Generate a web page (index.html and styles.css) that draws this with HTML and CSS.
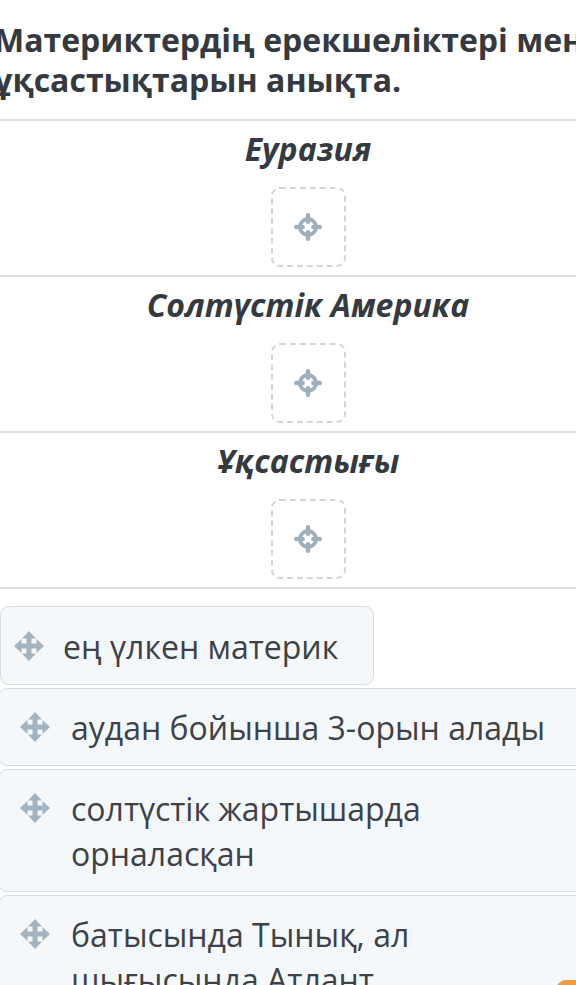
FILE: index.html
```html
<!DOCTYPE html>
<html lang="kk">
<head>
<meta charset="utf-8">
<title>Материктер</title>
<link rel="stylesheet" href="styles.css">
</head>
<body>
<div class="page">
  <h1 class="title"><span class="title-line">Материктердің ерекшеліктері мен</span><span class="title-line">ұқсастықтарын анықта.</span></h1>
  <div class="groups">
    <section class="group">
      <h2 class="group-name">Еуразия</h2>
      <div class="drop">
        <svg class="target" viewBox="0 0 28 28" width="30" height="30"><circle cx="14" cy="14" r="7.5" fill="none" stroke="currentColor" stroke-width="3.6"/><path d="M14 3v6M14 19v6M3 14h6M19 14h6" stroke="currentColor" stroke-width="4.2" stroke-linecap="round"/></svg>
      </div>
    </section>
    <section class="group">
      <h2 class="group-name">Солтүстік Америка</h2>
      <div class="drop">
        <svg class="target" viewBox="0 0 28 28" width="30" height="30"><circle cx="14" cy="14" r="7.5" fill="none" stroke="currentColor" stroke-width="3.6"/><path d="M14 3v6M14 19v6M3 14h6M19 14h6" stroke="currentColor" stroke-width="4.2" stroke-linecap="round"/></svg>
      </div>
    </section>
    <section class="group">
      <h2 class="group-name">Ұқсастығы</h2>
      <div class="drop">
        <svg class="target" viewBox="0 0 28 28" width="30" height="30"><circle cx="14" cy="14" r="7.5" fill="none" stroke="currentColor" stroke-width="3.6"/><path d="M14 3v6M14 19v6M3 14h6M19 14h6" stroke="currentColor" stroke-width="4.2" stroke-linecap="round"/></svg>
      </div>
    </section>
  </div>
  <ul class="items">
    <li class="item item--first">
      <svg class="move" viewBox="0 0 32 32" width="32" height="32"><path d="M16 1l7 7.5h-4.5v5h5V9l7.5 7-7.5 7v-4.5h-5v5H23L16 31l-7-7.5h4.5v-5h-5V23L1 16l7.5-7v4.5h5v-5H9z" fill="currentColor"/></svg>
      <span class="item-text">ең үлкен материк</span>
    </li>
    <li class="item">
      <svg class="move" viewBox="0 0 32 32" width="32" height="32"><path d="M16 1l7 7.5h-4.5v5h5V9l7.5 7-7.5 7v-4.5h-5v5H23L16 31l-7-7.5h4.5v-5h-5V23L1 16l7.5-7v4.5h5v-5H9z" fill="currentColor"/></svg>
      <span class="item-text">аудан бойынша 3-орын алады</span>
    </li>
    <li class="item">
      <svg class="move" viewBox="0 0 32 32" width="32" height="32"><path d="M16 1l7 7.5h-4.5v5h5V9l7.5 7-7.5 7v-4.5h-5v5H23L16 31l-7-7.5h4.5v-5h-5V23L1 16l7.5-7v4.5h5v-5H9z" fill="currentColor"/></svg>
      <span class="item-text">солтүстік жартышарда орналасқан</span>
    </li>
    <li class="item">
      <svg class="move" viewBox="0 0 32 32" width="32" height="32"><path d="M16 1l7 7.5h-4.5v5h5V9l7.5 7-7.5 7v-4.5h-5v5H23L16 31l-7-7.5h4.5v-5h-5V23L1 16l7.5-7v4.5h5v-5H9z" fill="currentColor"/></svg>
      <span class="item-text">батысында Тынық, ал шығысында Атлант мұхиттары</span>
    </li>
  </ul>
</div>
<div class="fab"></div>
</body>
</html>
```

FILE: styles.css
```css
html, body {
  margin: 0;
  padding: 0;
  background: #ffffff;
  overflow: hidden;
  height: 985px;
}
body {
  font-family: "Open Sans", "Noto Sans", sans-serif;
  color: #343a40;
  position: relative;
}
.page {
  margin-left: -6px;
  width: 628px;
}
.title {
  margin: 0;
  padding: 20px 0 0 0;
  font-size: 32px;
  line-height: 40px;
  font-weight: 700;
  color: #343a40;
  height: 100px;
  box-sizing: border-box;
}
.title-line {
  display: block;
  white-space: nowrap;
}
.groups {
  border-top: 2px solid #dbe1e0;
  margin-top: 19px;
}
.group {
  height: 154px;
  border-bottom: 2px solid #dbe1e0;
  display: flex;
  flex-direction: column;
  align-items: center;
}
.group-name {
  margin: 0;
  padding-top: 8px;
  font-size: 32px;
  line-height: 40px;
  font-weight: 700;
  font-style: italic;
  color: #343a40;
}
.drop {
  margin-top: 18px;
  width: 75px;
  height: 80px;
  box-sizing: border-box;
  border: 2px dashed #d3d6d8;
  border-radius: 9px;
  display: flex;
  align-items: center;
  justify-content: center;
  color: #9eafbd;
}
.items {
  list-style: none;
  margin: 17px 0 0 0;
  padding: 0 0 0 6px;
  display: flex;
  flex-direction: column;
  gap: 3px;
}
.item {
  display: flex;
  align-items: flex-start;
  box-sizing: border-box;
  background: #f4f8fb;
  border: 1.5px solid #d4dce0;
  border-radius: 9px;
  padding: 16px 20px 15px 20px;
  width: 640px;
  margin-left: -2px;
  color: #3c4247;
}
.item--first {
  width: 374px;
  margin-left: 0;
  padding-left: 12px;
  padding-top: 17px;
  padding-bottom: 15px;
}
.move {
  flex: none;
  color: #a3b3bf;
  margin-top: 6px;
  margin-right: 20px;
}
.item--first .move {
  margin-right: 18px;
}
.item-text {
  font-size: 32px;
  line-height: 45px;
  max-width: 476px;
}
.fab {
  position: absolute;
  right: -20px;
  bottom: -30px;
  width: 40px;
  height: 35px;
  border-radius: 10px;
  background: #f19a3e;
}
```
